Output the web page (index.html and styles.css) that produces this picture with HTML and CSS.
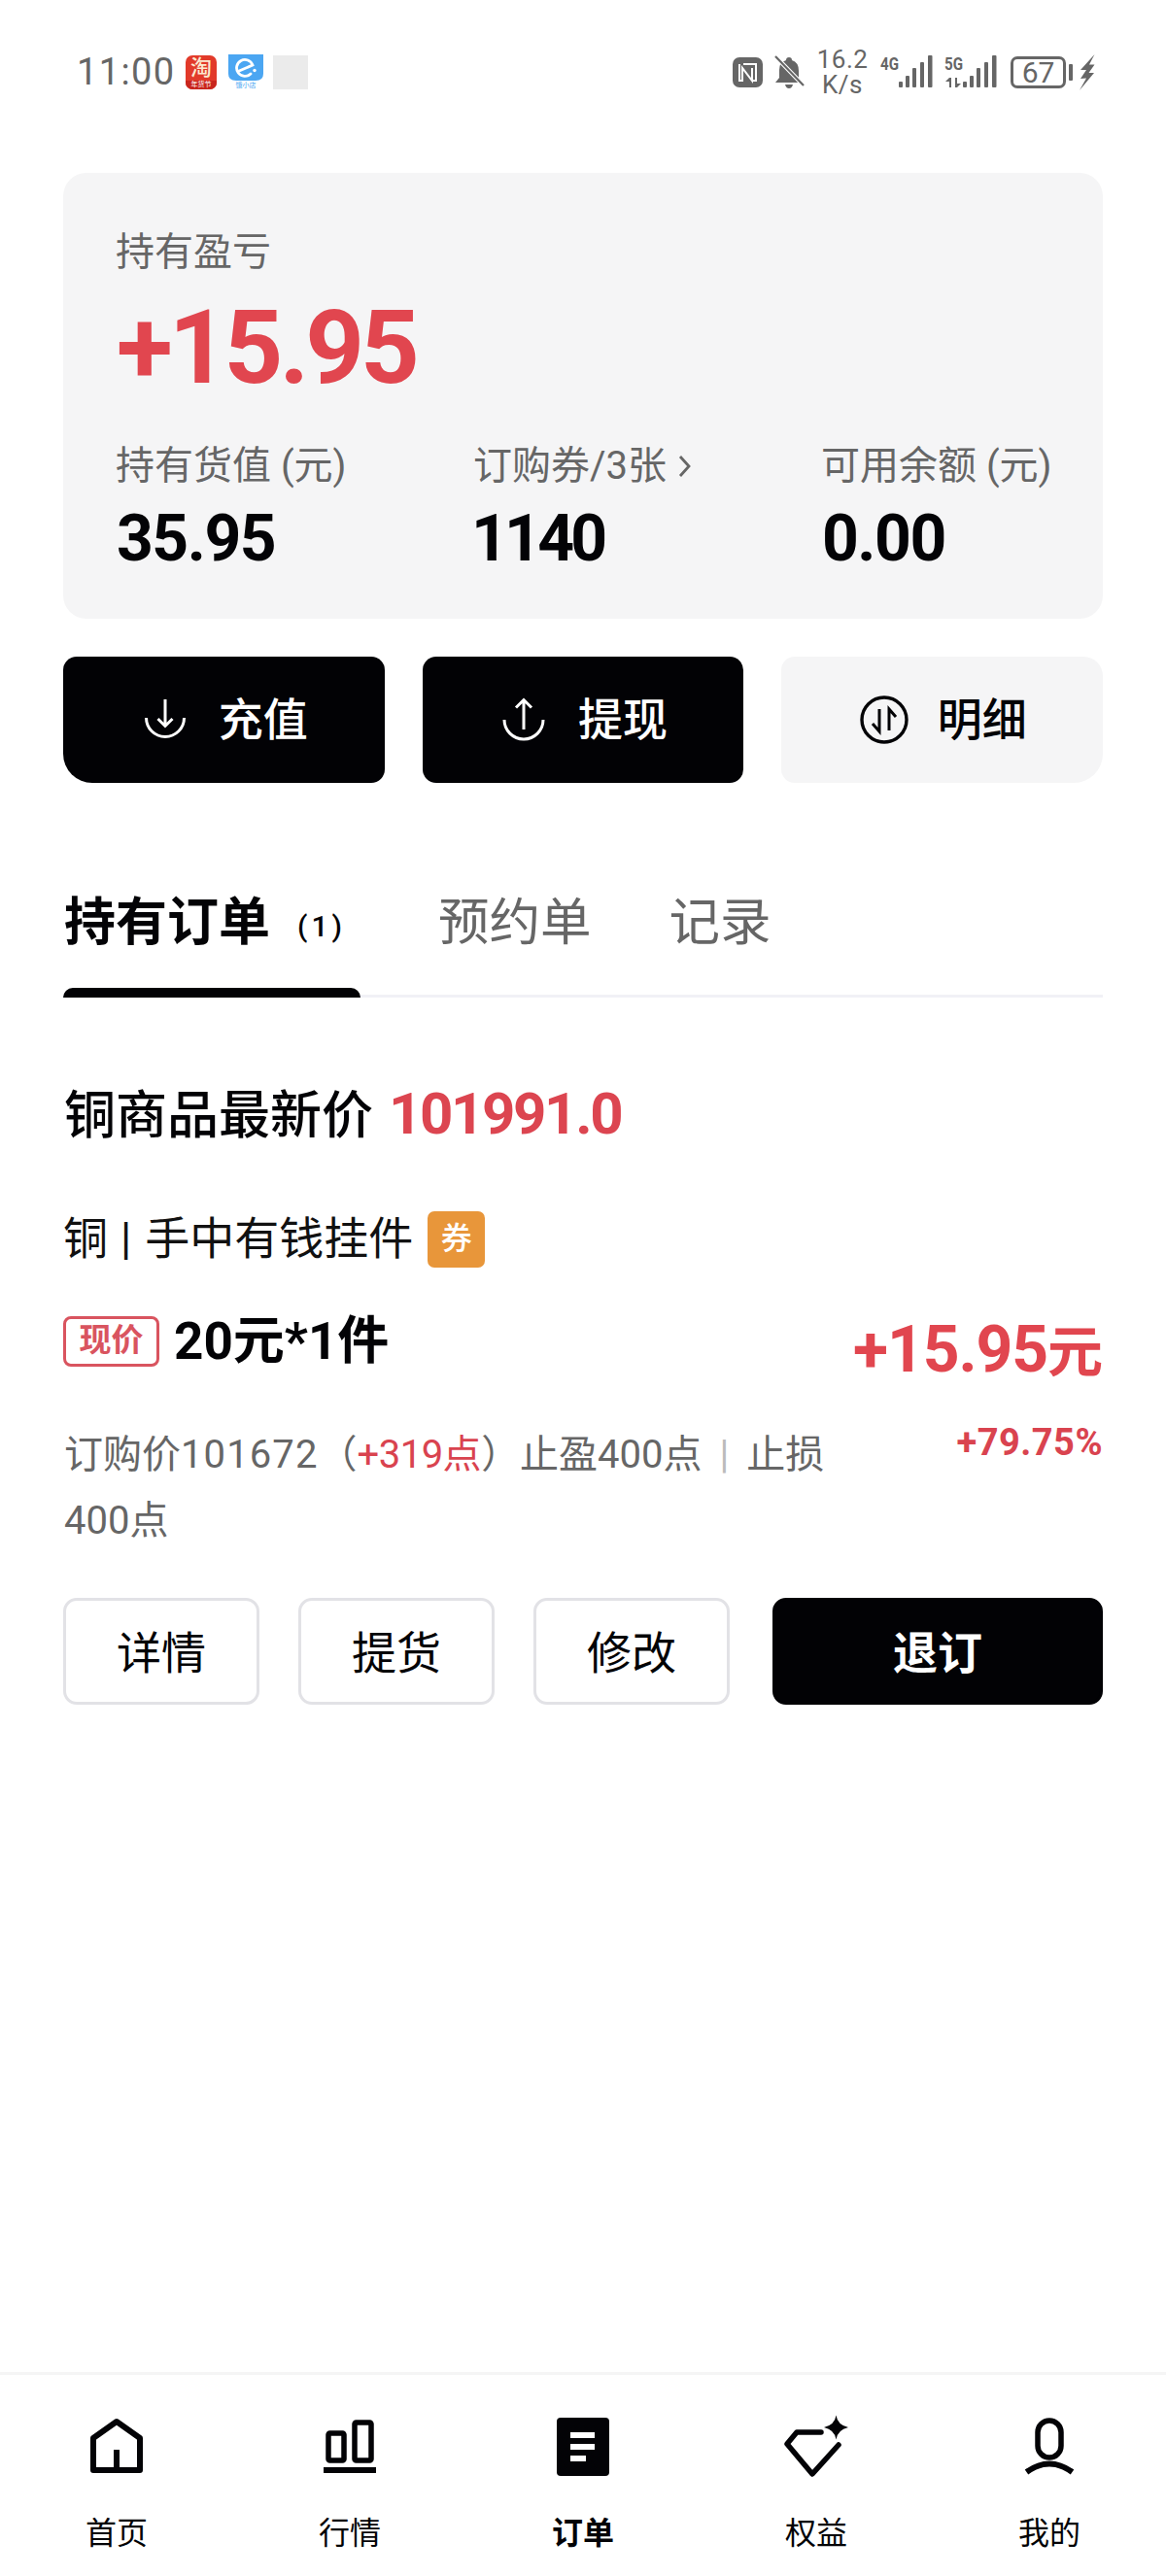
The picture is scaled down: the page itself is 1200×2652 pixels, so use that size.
FILE: index.html
```
<!DOCTYPE html>
<html lang="zh-CN">
<head>
<meta charset="utf-8">
<title>持有订单</title>
<link rel="stylesheet" href="styles.css">
</head>
<body>
<div class="page">
  <header class="status">
    <div class="status-left">
      <span class="time">11:00</span>
      <span class="app app-tb"><span class="tb-main">淘</span><span class="tb-sub">年货节</span></span>
      <svg class="app-el" viewBox="0 0 36 36"><path d="M0 0H36V20Q36 27 28 27H8Q0 27 0 20Z" fill="#4ba6f2"/><path d="M10 17.5L25 11A8.5 8.5 0 1 0 23 20" fill="none" stroke="#fff" stroke-width="2.8" stroke-linecap="round"/><circle cx="27" cy="16.5" r="1.7" fill="#fff"/><text x="18" y="34" font-size="7" text-anchor="middle" fill="#4ba6f2">饿小店</text></svg>
      <span class="app app-blank"></span>
    </div>
    <div class="status-right">
      <svg class="ic-nfc" viewBox="0 0 31 31"><rect width="31" height="31" rx="7" fill="#666"/><path d="M7 7V24H10V11L20 24V11" fill="none" stroke="#fff" stroke-width="2"/><path d="M11 7H24V24H21" fill="none" stroke="#fff" stroke-width="2"/></svg>
      <svg class="ic-bell" viewBox="0 0 31 34"><path d="M15 2Q18 2 18 5Q25 7 25 16V23L29 28H1L5 23V15Q5 7 12 5Q12 2 15 2ZM11 30H19Q18 34 15 34Q12 34 11 30Z" fill="#666"/><path d="M1 1L30 31" stroke="#fff" stroke-width="4.4"/><path d="M1 1L30 31" stroke="#666" stroke-width="2.2"/></svg>
      <div class="speed"><span>16.2</span><span>K/s</span></div>
      <svg class="ic-sig" viewBox="0 0 54 34"><text x="0" y="15" class="sig-text" textLength="19" lengthAdjust="spacingAndGlyphs">4G</text><g fill="#666"><rect x="19" y="27" width="4" height="6" rx="1"/><rect x="26" y="21" width="4" height="12" rx="1"/><rect x="33" y="13" width="4" height="20" rx="1"/><rect x="41" y="7" width="4" height="26" rx="1"/><rect x="49" y="0" width="4.5" height="33" rx="1"/></g></svg>
      <svg class="ic-sig" viewBox="0 0 54 34"><text x="0" y="15" class="sig-text" textLength="19" lengthAdjust="spacingAndGlyphs">5G</text><g fill="#666"><path d="M5 23V33H7V23ZM5 23L1 27H5ZM11 33V23H13V33ZM13 33L17 29H13Z"/><rect x="19" y="27" width="4" height="6" rx="1"/><rect x="26" y="21" width="4" height="12" rx="1"/><rect x="33" y="13" width="4" height="20" rx="1"/><rect x="41" y="7" width="4" height="26" rx="1"/><rect x="49" y="0" width="4.5" height="33" rx="1"/></g></svg>
      <div class="battery"><span class="battery-body">67</span><span class="battery-nub"></span></div>
      <svg class="ic-bolt" viewBox="0 0 16 37"><path d="M15.5 0L1 16H7L1 25L7 24.5L0 37L15 19H9.5L15.5 10.5H10Z" fill="#666"/></svg>
    </div>
  </header>

  <main class="main">
    <section class="card">
      <div class="label">持有盈亏</div>
      <div class="big">+15.95</div>
      <div class="stats">
        <div><div class="label">持有货值 (元)</div><div class="value">35.95</div></div>
        <div><div class="label">订购券/3张<svg class="chev" viewBox="0 0 14 26"><path d="M2 3L11 13L2 23" fill="none" stroke="#666" stroke-width="2.8"/></svg></div><div class="value value-tight">1140</div></div>
        <div><div class="label">可用余额 (元)</div><div class="value">0.00</div></div>
      </div>
    </section>

    <section class="actions">
      <button class="act act-dark act-first">
        <svg class="act-ic" viewBox="0 0 42 42"><path d="M1.5 19A19.5 19.5 0 0 0 40.5 19" fill="none" stroke="#fff" stroke-width="3"/><path d="M21 0V27M13.5 20L21 27.5L28.5 20" fill="none" stroke="#fff" stroke-width="3"/></svg>
        <span class="act-text">充值</span>
      </button>
      <button class="act act-dark">
        <svg class="act-ic act-ic-up" viewBox="0 0 44 44"><path d="M2 22A20 20 0 0 0 42 22" fill="none" stroke="#fff" stroke-width="3"/><path d="M22 32V1.5M14 9.5L22 1.5L30 9.5" fill="none" stroke="#fff" stroke-width="3"/></svg>
        <span class="act-text">提现</span>
      </button>
      <button class="act act-light">
        <svg class="act-ic-lg" viewBox="0 0 50 50"><circle cx="25" cy="25" r="23" fill="none" stroke="#030306" stroke-width="3.4"/><path d="M20 14V37L13 29M30 36V14L37 22" fill="none" stroke="#030306" stroke-width="3"/></svg>
        <span class="act-text">明细</span>
      </button>
    </section>

    <nav class="tabs">
      <div class="tab tab-on">持有订单<span class="tab-count">(1)</span></div>
      <div class="tab">预约单</div>
      <div class="tab">记录</div>
    </nav>

    <div class="latest"><span>铜商品最新价</span><span class="latest-num">101991.0</span></div>

    <div class="product"><span class="product-name">铜<span class="sep">|</span>手中有钱挂件</span><span class="badge">券</span></div>

    <div class="order">
      <div class="order-left">
        <div class="price-row"><span class="tag">现价</span><span class="price">20元*1件</span></div>
        <div class="desc">
          <div class="desc-line"><span>订购价</span><span class="digits">101672</span><span>（</span><span class="red">+319点</span><span>）止盈400点</span><span class="bar">|</span><span>止损</span></div>
          <div class="desc-line"><span>400点</span></div>
        </div>
      </div>
      <div class="order-right">
        <div class="pnl"><span class="pnl-num">+15.95</span><span class="pnl-unit">元</span></div>
        <div class="pct">+79.75%</div>
      </div>
    </div>

    <div class="order-actions">
      <button class="o-btn">详情</button>
      <button class="o-btn">提货</button>
      <button class="o-btn">修改</button>
      <button class="o-btn o-dark">退订</button>
    </div>
  </main>

  <footer class="nav">
    <div class="nav-item">
      <svg class="nav-ic" viewBox="0 0 54 60"><path d="M3 54V21L27 4L51 21V54Z" fill="none" stroke="#030306" stroke-width="6" stroke-linejoin="round"/><path d="M27 33V54" stroke="#030306" stroke-width="6"/></svg>
      <span>首页</span>
    </div>
    <div class="nav-item">
      <svg class="nav-ic" viewBox="0 0 54 60"><rect x="5" y="16" width="16" height="28" rx="1.5" fill="none" stroke="#030306" stroke-width="5.5"/><rect x="32" y="5" width="17" height="39" rx="1.5" fill="none" stroke="#030306" stroke-width="5.5"/><rect y="51" width="54" height="6" fill="#030306"/></svg>
      <span>行情</span>
    </div>
    <div class="nav-item nav-on">
      <svg class="nav-ic" viewBox="0 0 54 60"><rect width="54" height="60" rx="4" fill="#030306"/><rect x="14" y="15" width="25" height="6" fill="#fff"/><rect x="14" y="27" width="25" height="6" fill="#fff"/><rect x="14" y="39" width="16" height="6" fill="#fff"/></svg>
      <span>订单</span>
    </div>
    <div class="nav-item">
      <svg class="nav-ic nav-ic-w" viewBox="0 0 66 60"><path d="M38 15H13L3 27L29 58L56 28" fill="none" stroke="#030306" stroke-width="5.5" stroke-linejoin="round" stroke-linecap="round"/><path d="M53.5 -2.5Q55 7.5 66 10Q55 12.5 53.5 22.5Q52 12.5 41 10Q52 7.5 53.5 -2.5Z" fill="#030306"/></svg>
      <span>权益</span>
    </div>
    <div class="nav-item">
      <svg class="nav-ic" viewBox="0 0 54 60"><rect x="15" y="3" width="24" height="38" rx="12" fill="none" stroke="#030306" stroke-width="5.5"/><path d="M3.5 56Q27 39 50.5 56" fill="none" stroke="#030306" stroke-width="6"/></svg>
      <span>我的</span>
    </div>
  </footer>
</div>
</body>
</html>
```
FILE: styles.css
```
* { box-sizing: border-box; }
html, body { margin: 0; padding: 0; background: #fff; }
body { font-family: Roboto, "Noto Sans CJK SC", sans-serif; color: #030306; }
button { font: inherit; border: 0; padding: 0; margin: 0; }
svg { overflow: visible; }
.page { width: 1200px; height: 2652px; display: flex; flex-direction: column; overflow: hidden; }

.status { height: 148px; flex: none; display: flex; justify-content: space-between; align-items: center; padding: 0 73px 0 79px; color: #666; }
.status-left { display: flex; align-items: center; }
.time { font-size: 38px; line-height: 44px; letter-spacing: 1.4px; width: 112px; }
.app { display: block; width: 32px; height: 35px; }
.app-tb { background: #e23a2a; border-radius: 7px; display: flex; flex-direction: column; align-items: center; color: #fff; }
.tb-main { font-size: 22px; line-height: 26px; height: 26px; font-weight: 500; color: #fbe9d0; }
.tb-sub { font-size: 7px; line-height: 9px; height: 9px; width: 100%; text-align: center; color: #fff; background: #c9261d; border-radius: 0 0 7px 7px; }
.app-el { width: 36px; height: 36px; margin-left: 12px; }
.app-blank { width: 36px; height: 35px; background: #ebebeb; margin-left: 10px; }
.status-right { display: flex; align-items: center; }
.ic-nfc { width: 31px; height: 31px; }
.ic-bell { width: 31px; height: 34px; margin-left: 12px; }
.speed { width: 50px; margin-left: 14px; font-size: 26px; line-height: 26px; display: flex; flex-direction: column; align-items: center; letter-spacing: .5px; }
.ic-sig { width: 54px; height: 34px; margin-left: 12px; }
.speed + .ic-sig { margin-left: 14px; }
.sig-text { font-size: 18px; font-weight: 700; fill: #666; }
.battery { display: flex; align-items: center; margin-left: 14px; }
.battery-body { width: 57px; height: 33px; border: 3px solid #666; border-radius: 7px; font-size: 30px; line-height: 27px; text-align: center; }
.battery-nub { width: 4px; height: 17px; background: #666; margin-left: 3px; border-radius: 1px; }
.ic-bolt { width: 16px; height: 37px; margin-left: 7px; }

.main { padding: 30px 65px 0; flex: none; }
.card { height: 459px; background: #f5f5f6; border-radius: 24px; padding: 57px 54px 0; }
.label { font-size: 40px; line-height: 50px; color: #666; white-space: nowrap; }
.big { margin-top: 18px; padding-left: 1px; font-size: 106px; line-height: 110px; font-weight: 700; letter-spacing: -4px; color: #e1464f; }
.stats { margin-top: 42px; display: grid; grid-template-columns: 368px 358px 1fr; }
.value { margin-top: 15px; padding-left: 1px; font-size: 66px; line-height: 70px; font-weight: 700; letter-spacing: -1.5px; }
.value-tight { margin-left: -3px; letter-spacing: -3.8px; }
.chev { width: 14px; height: 26px; margin-left: 12px; }

.actions { margin-top: 39px; display: grid; grid-template-columns: repeat(3, 1fr); gap: 39px; }
.act { height: 130px; display: flex; align-items: center; justify-content: center; font-size: 46px; font-weight: 500; border-radius: 14px; }
.act-text { margin-bottom: 8px; }
.act-dark { background: #020205; color: #fff; gap: 34px; padding-left: 4px; }
.act-first { border-radius: 14px 14px 14px 30px; padding-left: 5px; }
.act-light { background: #f5f5f6; color: #030306; gap: 30px; padding-left: 2px; border-radius: 14px 20px 30px 14px; }
.act-ic { width: 42px; height: 42px; }
.act-ic-up { width: 44px; height: 44px; }
.act-ic-lg { width: 50px; height: 50px; }

.tabs { margin-top: 90px; height: 131px; display: flex; gap: 80px; border-bottom: 3px solid #f1f1f6; }
.tab { font-size: 52.5px; line-height: 108px; color: #666; white-space: nowrap; }
.tab-on { position: relative; width: 306px; padding-left: 1px; font-size: 53px; font-weight: 700; color: #030306; }
.tab-on::after { content: ""; position: absolute; left: 0; right: 0; bottom: -3px; height: 10px; background: #020205; border-radius: 10px 10px 0 0; }
.tab-count { font-size: 30px; font-weight: 500; margin-left: 28px; letter-spacing: 4px; position: relative; top: -4px; }

.latest { margin-top: 85px; height: 70px; display: flex; align-items: baseline; font-size: 53px; line-height: 70px; font-weight: 500; padding-left: 1px; }
.latest-num { margin-left: 16px; font-size: 60px; font-weight: 700; color: #dc4550; letter-spacing: -2.4px; }

.product { margin-top: 65px; height: 58px; display: flex; align-items: center; font-size: 46px; color: #111; }
.product-name { margin-bottom: 10px; }
.sep { margin: 0 14px 0 13px; }
.badge { width: 59px; height: 58px; margin-left: 15px; background: #e8963a; border-radius: 7px; color: #fff; font-size: 32px; font-weight: 500; text-align: center; line-height: 56px; }

.order { margin-top: 50px; display: flex; justify-content: space-between; }
.order-left { width: 790px; }
.price-row { height: 52px; display: flex; align-items: center; }
.tag { width: 99px; height: 52px; border: 3px solid #d9545f; border-radius: 8px; color: #d9545f; font-size: 33px; font-weight: 700; line-height: 44px; text-align: center; }
.price { margin-left: 15px; font-size: 53px; font-weight: 700; line-height: 52px; }
.desc { margin-top: 57px; font-size: 40px; line-height: 68px; color: #666; padding-left: 1px; }
.desc-line { height: 68px; white-space: nowrap; }
.digits { letter-spacing: 1.1px; }
.red { color: #d9434f; letter-spacing: -.5px; }
.bar { color: #bbb; margin: 0 18px; }
.order-right { display: flex; flex-direction: column; align-items: flex-end; }
.pnl { height: 70px; line-height: 70px; white-space: nowrap; color: #e1464f; font-weight: 700; }
.pnl-num { font-size: 66px; letter-spacing: -1.1px; }
.pnl-unit { font-size: 57px; }
.pct { margin-top: 35px; font-size: 38px; line-height: 50px; font-weight: 700; color: #d9434f; letter-spacing: .5px; }

.order-actions { margin-top: 45px; display: flex; gap: 40px; }
.o-btn { width: 202px; height: 110px; padding-bottom: 5px; background: #fff; border: 3px solid #e2e2e6; border-radius: 14px; font-size: 46px; color: #030306; }
.o-dark { width: 340px; margin-left: 4px; background: #020205; border-color: #020205; color: #fff; font-weight: 700; }

.nav { margin-top: auto; height: 210px; flex: none; border-top: 3px solid #f5f5f5; display: grid; grid-template-columns: repeat(5, 1fr); padding-top: 44px; }
.nav-item { display: flex; flex-direction: column; align-items: center; font-size: 32px; line-height: 40px; gap: 39px; color: #030306; }
.nav-on { font-weight: 700; }
.nav-ic { width: 54px; height: 60px; flex: none; }
.nav-ic-w { width: 66px; }
```
